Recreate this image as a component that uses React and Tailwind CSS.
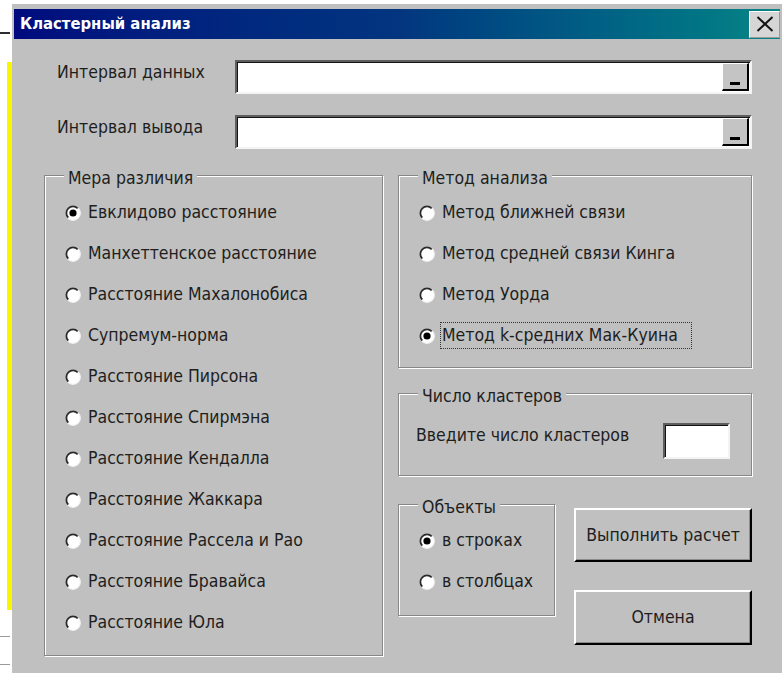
import React from "react";

const FONT = "font-['DejaVu_Sans_Condensed','DejaVu_Sans',sans-serif]";

function Radio({ checked }) {
  return (
    <svg width="16" height="16" viewBox="0 0 16 16" className="shrink-0">
      <circle cx="8" cy="8" r="7.3" fill="#ffffff" />
      <path d="M3.3 12.7A6.6 6.6 0 0 1 12.7 3.3" fill="none" stroke="#2a2a2a" strokeWidth="1.8" />
      <path d="M13.2 2.8A7.3 7.3 0 0 1 2.8 13.2" fill="none" stroke="#f2f2f2" strokeWidth="1.2" />
      {checked && <circle cx="8" cy="8" r="3.6" fill="#000000" />}
    </svg>
  );
}

function Option({ label, checked, focused }) {
  return (
    <div className="h-[41px] flex items-center pl-[20px]">
      <Radio checked={checked} />
      {focused ? (
        <span className="ml-[5px] pl-[1px] pr-[13px] py-[3px] leading-[19px] border border-dotted border-[#333333]">
          {label}
        </span>
      ) : (
        <span className="ml-[7px] leading-[19px]">{label}</span>
      )}
    </div>
  );
}

function Group({ title, className, children }) {
  return (
    <fieldset
      className={`m-0 p-0 min-w-0 border border-[#878787] shadow-[inset_1px_1px_0_#ffffff,1px_1px_0_#ffffff] ${className}`}
    >
      <legend className="ml-[19px] px-[4px] pt-[6px] leading-[19px] bg-[#c0c0c0]">{title}</legend>
      {children}
    </fieldset>
  );
}

function RangeField() {
  return (
    <div className="w-[517px] h-[34px] bg-white border-2 border-t-[#5e5e5e] border-l-[#5e5e5e] border-b-[#f4f4f4] border-r-[#f4f4f4] shadow-[inset_1px_1px_0_#141414] flex justify-end items-start pt-[1px] pr-[1px]">
      <div className="w-[27px] h-[28px] bg-[#c4c4c4] border-t border-l border-t-white border-l-white border-b-2 border-r-2 border-b-black border-r-black flex items-end justify-center pb-[4px]">
        <div className="w-[10px] h-[3px] bg-black" />
      </div>
    </div>
  );
}

function PushButton({ children, className }) {
  return (
    <button
      type="button"
      className={`w-[178px] bg-[#c0c0c0] border-t-2 border-l-2 border-t-white border-l-white border-b-2 border-r-2 border-b-black border-r-black shadow-[inset_-1px_-1px_0_#8a8a8a] flex items-center justify-center leading-[19px] ${className}`}
    >
      {children}
    </button>
  );
}

function EdgeStrip() {
  return (
    <div className="w-[12px] shrink-0 flex flex-col">
      <div className="h-[32px]" />
      <div className="h-[2px] w-[10px] bg-[#2c2c2c]" />
      <div className="h-[28px]" />
      <div className="ml-[7px] w-[5px] h-[548px] bg-[#f7f700]" />
      <div className="h-[26px]" />
      <div className="h-px w-[10px] bg-[#9a9a9a]" />
      <div className="h-[27px]" />
      <div className="h-px w-[10px] bg-[#9a9a9a]" />
    </div>
  );
}

function CloseButton() {
  return (
    <div className="w-[31px] h-[27px] bg-[#d6d6d6] border-t border-l border-t-white border-l-white border-b border-r border-b-[#9a9a9a] border-r-[#9a9a9a] flex items-center justify-center">
      <svg width="18" height="16" viewBox="0 0 18 16">
        <path d="M1.5 1L16.5 15M16.5 1L1.5 15" stroke="#111111" strokeWidth="2" fill="none" />
      </svg>
    </div>
  );
}

const distances = [
  "Евклидово расстояние",
  "Манхеттенское расстояние",
  "Расстояние Махалонобиса",
  "Супремум-норма",
  "Расстояние Пирсона",
  "Расстояние Спирмэна",
  "Расстояние Кендалла",
  "Расстояние Жаккара",
  "Расстояние Рассела и Рао",
  "Расстояние Бравайса",
  "Расстояние Юла",
];

const methods = [
  "Метод ближней связи",
  "Метод средней связи Кинга",
  "Метод Уорда",
  "Метод k-средних Мак-Куина",
];

export default function App() {
  return (
    <div className={`w-[782px] h-[673px] bg-white flex overflow-hidden ${FONT} text-[17.5px] text-[#1e1e1e]`}>
      <EdgeStrip />
      <div className="mt-[4px] w-[770px] h-[669px] bg-[#c0c0c0] px-[2px] pt-[5px] flex flex-col">
        {/* title bar */}
        <div className="h-[30px] shrink-0 flex items-center justify-between bg-linear-to-r from-[#000a7e] via-[#04357f] to-[#0b8585] pl-[6px]">
          <span className="text-white font-bold text-[16.5px]">Кластерный анализ</span>
          <CloseButton />
        </div>

        <div className="flex flex-col pl-[30px]">
          <div className="mt-[21px] flex items-start">
            <div className="w-[191px] pl-[13px] pt-[3px] leading-[19px]">Интервал данных</div>
            <RangeField />
          </div>
          <div className="mt-[21px] flex items-start">
            <div className="w-[191px] pl-[13px] pt-[3px] leading-[19px]">Интервал вывода</div>
            <RangeField />
          </div>

          <div className="mt-[14px] flex gap-[15px] items-start">
            <Group title="Мера различия" className="w-[339px]">
              <div className="pt-[4px] pb-[12px]">
                {distances.map((d, i) => (
                  <Option key={d} label={d} checked={i === 0} />
                ))}
              </div>
            </Group>

            <div className="w-[354px] flex flex-col">
              <Group title="Метод анализа" className="w-[354px]">
                <div className="pt-[4px] pb-[11px]">
                  {methods.map((m, i) => (
                    <Option key={m} label={m} checked={i === 3} focused={i === 3} />
                  ))}
                </div>
              </Group>

              <Group title="Число кластеров" className="w-[354px] mt-[13px]">
                <div className="flex items-start pl-[17px] pt-[17px] pb-[16px]">
                  <span className="w-[247px] pt-[3px] leading-[19px]">Введите число кластеров</span>
                  <div className="w-[67px] h-[36px] bg-white border-2 border-t-[#5e5e5e] border-l-[#5e5e5e] border-b-[#f4f4f4] border-r-[#f4f4f4] shadow-[inset_1px_1px_0_#141414]" />
                </div>
              </Group>

              <div className="mt-[16px] flex items-start gap-[19px]">
                <Group title="Объекты" className="w-[158px]">
                  <div className="pt-[3px] pb-[13px]">
                    <Option label="в строках" checked />
                    <Option label="в столбцах" />
                  </div>
                </Group>
                <div className="flex flex-col pt-[16px]">
                  <PushButton className="h-[54px]">Выполнить расчет</PushButton>
                  <PushButton className="h-[55px] mt-[28px]">Отмена</PushButton>
                </div>
              </div>
            </div>
          </div>
        </div>
      </div>
    </div>
  );
}
